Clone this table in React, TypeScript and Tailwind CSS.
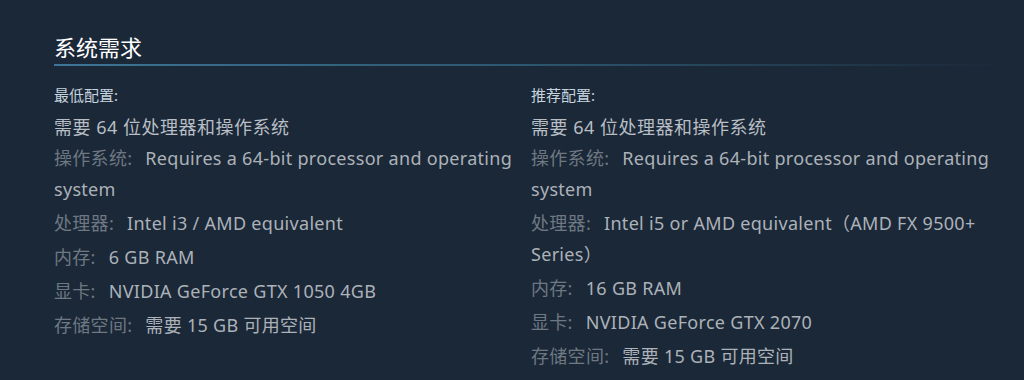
import React from 'react';

type Req = { label: string; value: string };

const minimum: Req[] = [
  { label: '操作系统:', value: 'Requires a 64-bit processor and operating system' },
  { label: '处理器:', value: 'Intel i3 / AMD equivalent' },
  { label: '内存:', value: '6 GB RAM' },
  { label: '显卡:', value: 'NVIDIA GeForce GTX 1050 4GB' },
  { label: '存储空间:', value: '需要 15 GB 可用空间' },
];

const recommended: Req[] = [
  { label: '操作系统:', value: 'Requires a 64-bit processor and operating system' },
  { label: '处理器:', value: 'Intel i5 or AMD equivalent（AMD FX 9500+ Series）' },
  { label: '内存:', value: '16 GB RAM' },
  { label: '显卡:', value: 'NVIDIA GeForce GTX 2070' },
  { label: '存储空间:', value: '需要 15 GB 可用空间' },
];

function ReqColumn({ title, items }: { title: string; items: Req[] }) {
  return (
    <div className="w-[462px]">
      <div className="text-[15px] leading-[20px] text-[#c6d4df]">{title}</div>
      <div className="mt-[9px] text-[18px] leading-[26px] tracking-[0.5px] text-[#b8bec4]">需要 64 位处理器和操作系统</div>
      <ul className="mt-[3px] space-y-[3px]">
        {items.map((item) => (
          <li key={item.label} className="text-[18px] leading-[31px] tracking-[0.3px] text-[#acb2b8]">
            <span className="text-[#6e7882]">{item.label}</span>
            <span className="ml-[13px]">{item.value}</span>
          </li>
        ))}
      </ul>
    </div>
  );
}

export default function App() {
  return (
    <div
      className="w-[1024px] h-[380px] overflow-hidden bg-[#1b2838] pl-[54px] pt-[32px]"
      style={{ fontFamily: '"Noto Sans", "Noto Sans CJK SC", sans-serif' }}
    >
      <h2 className="text-[22px] leading-[30px] text-white">系统需求</h2>
      <div className="mt-[2px] h-[2px] w-[950px] bg-gradient-to-r from-[#3e7596] via-[#2c566f] to-transparent" />
      <div className="mt-[19px] flex gap-[15px]">
        <ReqColumn title="最低配置:" items={minimum} />
        <ReqColumn title="推荐配置:" items={recommended} />
      </div>
    </div>
  );
}
